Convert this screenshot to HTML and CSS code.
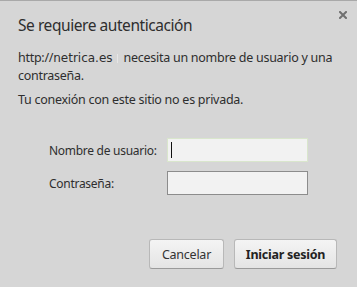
FILE: index.html
```html
<!DOCTYPE html>
<html lang="es">
<head>
<meta charset="utf-8">
<link rel="stylesheet" href="styles.css">
</head>
<body>
<div class="dialog">
  <div class="header">
    <h1 class="title">Se requiere autenticación</h1>
    <svg class="close" width="8" height="8" viewBox="0 0 8 8"><path d="M1 1L7 7M7 1L1 7" stroke="#707070" stroke-width="2" stroke-linecap="square"/></svg>
  </div>
  <p class="msg">http://<span class="host">netrica.es</span><span class="mark"></span> necesita un nombre de usuario y una contraseña.</p>
  <p class="msg priv">Tu conexión con este sitio no es privada.</p>
  <div class="form">
    <label class="lbl">Nombre de usuario:</label>
    <div class="field focus"><span class="caret"></span></div>
    <label class="lbl">Contraseña:</label>
    <div class="field"></div>
  </div>
  <div class="actions">
    <button class="btn cancel">Cancelar</button>
    <button class="btn primary">Iniciar sesión</button>
  </div>
</div>
</body>
</html>
```
FILE: styles.css
```css
html, body {
  margin: 0;
  padding: 0;
  background: #d6d6d6;
}
.dialog {
  width: 357px;
  height: 287px;
  box-sizing: border-box;
  border-top: 1px solid #a9a9a9;
  font-family: "Noto Sans", "Open Sans", sans-serif;
  color: #2e2e2e;
  padding: 0 20px 0 18px;
}
.header {
  display: flex;
  justify-content: space-between;
  align-items: flex-start;
}
.title {
  margin: 13px 0 0 0;
  font-size: 15.5px;
  letter-spacing: -0.44px;
  font-weight: normal;
  line-height: 22px;
}
.close {
  margin: 10px -10px 0 0;
}
.msg {
  margin: 13px 0 0 0;
  font-size: 12.5px;
  letter-spacing: -0.27px;
  line-height: 17px;
}
.host {
  font-family: "DejaVu Sans", sans-serif;
  font-size: 12px;
  letter-spacing: 0;
}
.mark {
  display: inline-block;
  width: 1px;
  height: 9px;
  background: #e6e6e6;
  margin: 0 3px 0 4px;
  vertical-align: -1px;
}
.msg.priv {
  margin-top: 7px;
}
.form {
  display: grid;
  grid-template-columns: 118px 141px;
  row-gap: 9px;
  align-items: center;
  margin: 30px 0 0 31px;
  font-size: 12px;
  letter-spacing: -0.28px;
}
.field {
  height: 24px;
  box-sizing: border-box;
  background: #f2f2f2;
  border: 1px solid #8c8c8c;
  display: flex;
  align-items: center;
  padding-left: 3px;
}
.field.focus {
  border-color: #d9e6cc;
}
.caret {
  width: 1px;
  height: 16px;
  background: #111;
}
.actions {
  display: flex;
  justify-content: flex-end;
  gap: 10px;
  margin: 44px 0 0 0;
}
.btn {
  height: 30px;
  box-sizing: border-box;
  border: 1px solid #b8b8b8;
  border-bottom-color: #9a9a9a;
  border-radius: 3px;
  background: linear-gradient(#f4f4f4, #e4e4e4);
  font-family: "Noto Sans", "Open Sans", sans-serif;
  font-size: 12.5px;
  letter-spacing: -0.25px;
  color: #333;
  padding: 0;
  text-align: center;
}
.btn.cancel {
  width: 75px;
}
.btn.primary {
  width: 103px;
  font-weight: bold;
  color: #222;
}
```
